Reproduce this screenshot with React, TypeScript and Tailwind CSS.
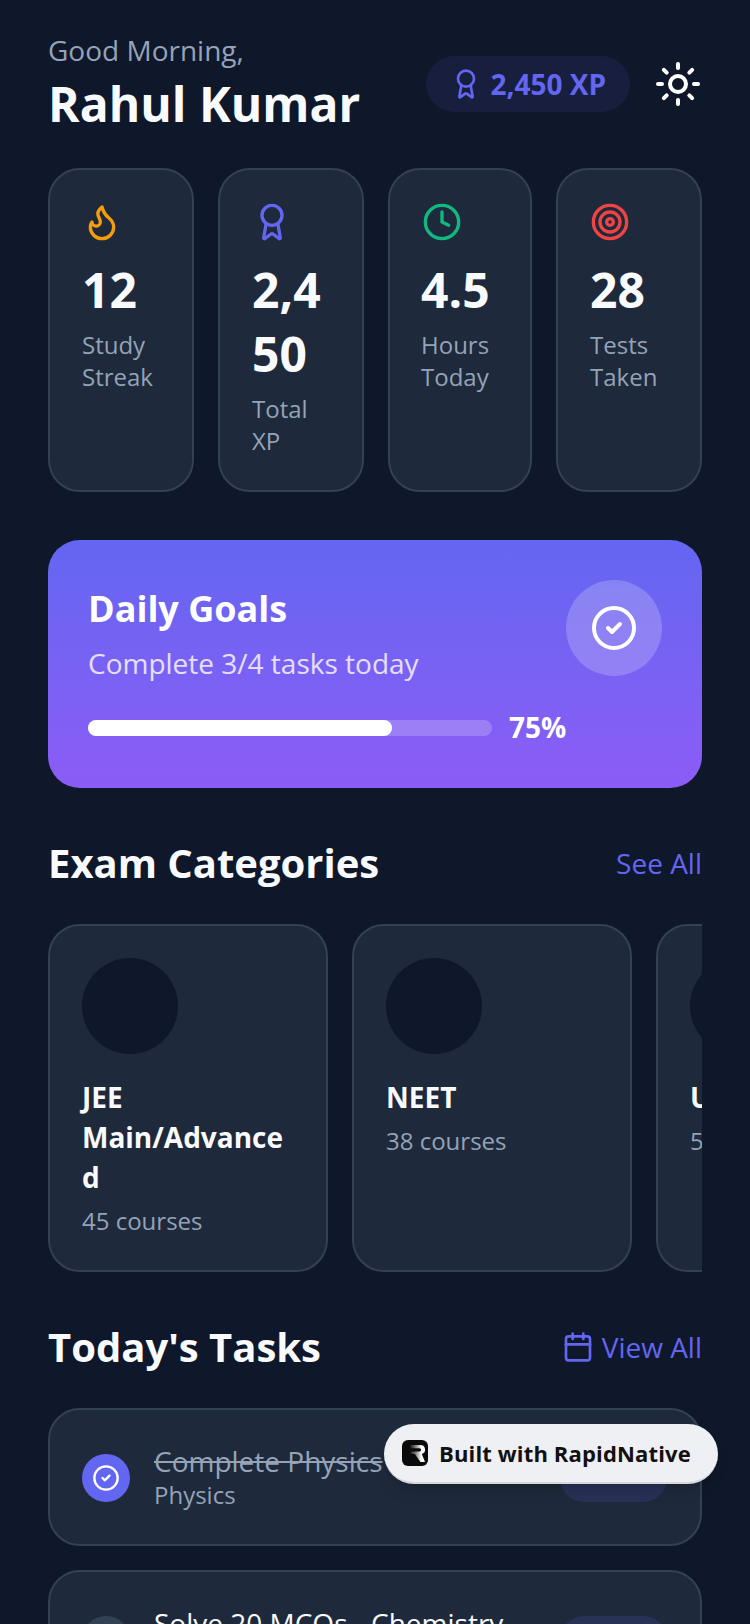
import { Award, Calendar, CircleCheck, Clock, Flame, Sun, Target } from "lucide-react";

const stats = [
  { icon: <Flame size={40} className="text-[#f59e0b]" />, value: "12", label: "Study Streak", width: "w-[146px]", pad: "p-8", iconBox: "h-10 w-10" },
  { icon: <Award size={40} className="text-[#6366f1]" />, value: "2,450", label: "Total XP", width: "w-[146px]", pad: "p-8", iconBox: "h-10 w-10" },
  { icon: <Clock size={40} className="text-[#10b981]" />, value: "4.5", label: "Hours Today", width: "w-[144px]", pad: "p-8 pl-[31px]", iconBox: "ml-px h-10 w-10" },
  { icon: <Target size={40} className="text-[#ef4444]" />, value: "28", label: "Tests Taken", width: "w-[146px]", pad: "p-8", iconBox: "h-10 w-10" },
];

const categories = [
  { name: "JEE Main/Advanced", courses: "45 courses" },
  { name: "NEET", courses: "38 courses" },
  { name: "UPSC", courses: "52 courses" },
];

export default function App() {
  return (
    <div className="h-[1624px] overflow-hidden bg-[#0f172a] px-12 pt-7 font-['Open_Sans','Noto_Sans',sans-serif] text-white">
      <header className="flex items-center justify-between">
        <div>
          <div className="mt-px text-[28px] leading-[43px] text-[#94a3b8]">Good Morning,</div>
          <div className="text-[48px] font-bold leading-[64px] text-[#f8fafc]">Rahul Kumar</div>
        </div>
        <div className="mt-1 flex items-center gap-6">
          <div className="flex h-14 items-center gap-2 rounded-full bg-[#6366f1]/10 px-6">
            <Award size={32} className="text-[#6366f1]" />
            <span className="text-[28px] font-bold leading-10 text-[#6366f1]">2,450 XP</span>
          </div>
          <Sun size={48} className="text-white" />
        </div>
      </header>

      <section className="mt-8 flex gap-6">
        {stats.map((s) => (
          <div key={s.label} className={`${s.width} ${s.pad} flex h-[324px] shrink-0 flex-col rounded-[32px] border-2 border-[#334155] bg-[#1e293b]`}>
            <div className={s.iconBox}>{s.icon}</div>
            <div className="mt-4 break-all text-[48px] font-bold leading-[64px] text-[#f8fafc]">{s.value}</div>
            <div className="mt-[7px] text-[24px] leading-8 text-[#94a3b8]">{s.label}</div>
          </div>
        ))}
      </section>

      <section className="mt-12 flex h-[248px] items-start justify-between rounded-[32px] bg-gradient-to-b from-[#6366f1] to-[#8b5cf6] p-10">
        <div className="w-[480px]">
          <div className="text-[36px] font-bold leading-[58px]">Daily Goals</div>
          <div className="mt-[5px] text-[28px] leading-10 text-white/80">Complete 3/4 tasks today</div>
          <div className="mt-[27px] flex items-center gap-[17px]">
            <div className="h-4 w-[404px] shrink-0 rounded-full bg-white/20">
              <div className="h-4 w-[304px] rounded-full bg-white" />
            </div>
            <span className="-translate-y-px text-[28px] font-bold leading-9">75%</span>
          </div>
        </div>
        <div className="flex h-24 w-24 items-center justify-center rounded-full bg-white/20">
          <CircleCheck size={48} className="text-white" />
        </div>
      </section>

      <section className="mt-[47px]">
        <div className="flex items-center justify-between">
          <h2 className="text-[40px] font-bold leading-[56px] text-[#f8fafc]">Exam Categories</h2>
          <span className="text-[28px] leading-10 text-[#6366f1]">See All</span>
        </div>
        <div className="mt-[33px] flex gap-6 overflow-hidden">
          {categories.map((c) => (
            <div key={c.name} className="h-[348px] w-[280px] shrink-0 rounded-[32px] border-2 border-[#334155] bg-[#1e293b] p-8">
              <div className="h-24 w-24 rounded-full bg-[#0f172a]" />
              <div className="mt-[23px] break-words text-[28px] font-bold leading-10 text-[#f8fafc]">{c.name}</div>
              <div className="mt-2 text-[24px] leading-8 text-[#94a3b8]">{c.courses}</div>
            </div>
          ))}
        </div>
      </section>

      <section className="mt-[47px]">
        <div className="flex items-center justify-between">
          <h2 className="text-[40px] font-bold leading-[56px] text-[#f8fafc]">Today's Tasks</h2>
          <div className="flex items-center gap-2 text-[#6366f1]">
            <Calendar size={32} />
            <span className="text-[28px] leading-10">View All</span>
          </div>
        </div>
        <div className="mt-[33px] flex flex-col gap-6">
          <div className="flex h-[138px] shrink-0 items-center gap-6 rounded-[32px] border-2 border-[#334155] bg-[#1e293b] px-8">
            <div className="mt-[2px] flex h-12 w-12 items-center justify-center rounded-full bg-[#6366f1]">
              <CircleCheck size={28} className="text-white" />
            </div>
            <div className="flex-1">
              <div className="text-[28px] leading-9 text-[#94a3b8] line-through">Complete Physics</div>
              <div className="text-[24px] leading-8 text-[#94a3b8]">Physics</div>
            </div>
            <div className="mr-px mt-[2px] h-12 w-[107px] rounded-3xl bg-[#6366f1]/15" />
          </div>
          <div className="flex h-[138px] shrink-0 items-center gap-6 rounded-[32px] border-2 border-[#334155] bg-[#1e293b] px-8">
            <div className="mt-[2px] h-12 w-12 rounded-full bg-[#334155]" />
            <div className="flex-1">
              <div className="text-[28px] leading-9 text-[#f8fafc]">Solve 20 MCQs - Chemistry</div>
              <div className="text-[24px] leading-8 text-[#94a3b8]">Chemistry</div>
            </div>
            <div className="mr-px mt-[2px] h-12 w-[107px] rounded-3xl bg-[#6366f1]/15" />
          </div>
        </div>
      </section>

      <div className="absolute left-[384px] top-[1424px] flex h-[60px] w-[334px] items-center gap-[11px] rounded-full border-b-2 border-[#d5d8dd] bg-[#eff0f4] px-[18px] shadow-lg">
        <svg width="26" height="26" viewBox="0 0 26 26" className="shrink-0">
          <defs>
            <linearGradient id="rn" x1="0" y1="0" x2="1" y2="0">
              <stop offset="0" stopColor="#111" />
              <stop offset="0.45" stopColor="#999" />
              <stop offset="0.75" stopColor="#fff" />
            </linearGradient>
          </defs>
          <rect width="26" height="26" rx="6" fill="#0a0a0a" />
          <path d="M8 5h10.5a4.6 4.6 0 0 1 1.3 9L23 22h-4.6l-5.6-8H8v-2.6h9.5a1.6 1.6 0 0 0 0-3.2H8z" fill="url(#rn)" />
        </svg>
        <span className="whitespace-nowrap text-[22px] font-bold leading-8 tracking-[0.15px] text-[#111]">Built with RapidNative</span>
      </div>
    </div>
  );
}
